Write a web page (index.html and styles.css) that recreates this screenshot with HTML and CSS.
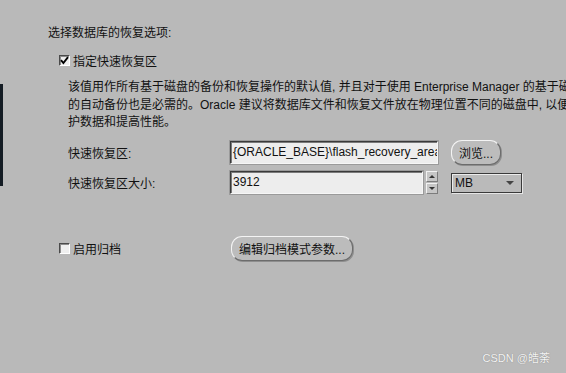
FILE: index.html
```html
<!DOCTYPE html>
<html lang="zh-CN">
<head>
    <meta charset="UTF-8">
    <meta name="viewport" content="width=device-width, initial-scale=1.0">
    <title>恢复选项</title>
    <link rel="stylesheet" href="styles.css">
</head>
<body>
    <div class="edge"></div>
    <div class="dialog">
        <div class="title">选择数据库的恢复选项:</div>
        <label class="option">
            <span class="box">
                <svg width="9" height="9" viewBox="0 0 9 9"><path d="M1 4.2 L3.4 7 L8 1.2" fill="none" stroke="#000" stroke-width="1.9"/></svg>
            </span>
            指定快速恢复区
        </label>
        <div class="desc">
            <span>该值用作所有基于磁盘的备份和恢复操作的默认值, 并且对于使用 Enterprise Manager 的基于磁盘</span>
            <span>的自动备份也是必需的。Oracle 建议将数据库文件和恢复文件放在物理位置不同的磁盘中, 以便保</span>
            <span>护数据和提高性能。</span>
        </div>
        <div class="fields">
            <div class="row first">
                <span class="field-label">快速恢复区:</span>
                <div class="text-input wide">{ORACLE_BASE}\flash_recovery_area</div>
                <button class="btn browse">浏览...</button>
            </div>
            <div class="row second">
                <span class="field-label">快速恢复区大小:</span>
                <div class="text-input narrow">3912</div>
                <div class="spinner">
                    <span class="up"></span>
                    <span class="down"></span>
                </div>
                <div class="select">MB<span class="arrow"></span></div>
            </div>
        </div>
        <div class="archive">
            <label class="option">
                <span class="box"></span>
                启用归档
            </label>
            <button class="btn edit">编辑归档模式参数...</button>
        </div>
    </div>
    <div class="watermark">CSDN @皓荼</div>
</body>
</html>
```

FILE: styles.css
```css
/* 整体 */
body{
    margin: 0;
    width: 566px;
    height: 373px;
    overflow: hidden;
    position: relative;
    background: #b9b9b9;
    color: #111;
    font-family: "Liberation Sans", "Noto Sans CJK SC", sans-serif;
    font-size: 12px;
}
/* 左边窗口边 */
.edge{
    position: absolute;
    left: 0;
    top: 84px;
    width: 3px;
    height: 102px;
    background: #141c24;
}
.dialog{
    padding: 25px 0 0 48px;
}
.title{line-height: 16px;}
/* 复选框 */
.option{
    display: flex;
    align-items: center;
    gap: 3px;
    height: 12px;
    margin: 13px 0 0 11px;
}
.box{
    flex: none;
    width: 11px;
    height: 11px;
    box-sizing: border-box;
    display: flex;
    align-items: center;
    justify-content: center;
    background: #efefef;
    border: 1px solid #fff;
    border-top-color: #4a4a4a;
    border-left-color: #4a4a4a;
    box-shadow: inset 1px 1px 0 #8c8c8c;
}
/* 说明文字 */
.desc{
    margin-top: 13px;
    padding-left: 20px;
    line-height: 17.5px;
}
.desc span{
    display: block;
    white-space: nowrap;
}
/* 两行输入 */
.fields{
    margin-top: 8.5px;
    padding-left: 20px;
}
.row{
    display: flex;
    align-items: center;
}
.row.first{height: 25px;}
.row.second{height: 23px; margin-top: 6px;}
.field-label{
    flex: none;
    width: 162px;
}
.text-input{
    flex: none;
    height: 23px;
    box-sizing: border-box;
    padding: 0 2px;
    line-height: 20px;
    white-space: nowrap;
    overflow: hidden;
    background: #ededed;
    border: 1px solid #f6f6f6;
    border-top-color: #3a3a3a;
    border-left-color: #3a3a3a;
    box-shadow: inset 1px 1px 0 #7a7a7a, 0 0 0 1px #9a9a9a;
}
.wide{width: 208px;}
.narrow{width: 193px;}
/* 按钮 */
.btn{
    flex: none;
    height: 25px;
    padding: 0;
    font: inherit;
    color: #111;
    background: #bcbcbc;
    border: 1px solid #6c6c6c;
    border-top-color: #f4f4f4;
    border-left-color: #f4f4f4;
    border-radius: 11px;
    box-shadow: 1px 1px 0 #8e8e8e;
}
.browse{
    width: 50px;
    margin-left: 13px;
}
.edit{width: 122px;}
/* 上下箭头 */
.spinner{
    flex: none;
    width: 12px;
    height: 23px;
    margin-left: 3px;
    display: flex;
    flex-direction: column;
    gap: 1px;
}
.spinner span{
    flex: 1;
    position: relative;
    background: #c6c6c6;
    border: 1px solid #7c7c7c;
    border-top-color: #f2f2f2;
    border-left-color: #f2f2f2;
}
.spinner span::after{
    content: "";
    position: absolute;
    left: 2px;
    top: 3px;
    border-left: 3px solid transparent;
    border-right: 3px solid transparent;
}
.spinner .up::after{border-bottom: 3px solid #333;}
.spinner .down::after{border-top: 3px solid #333;}
/* 下拉 */
.select{
    flex: none;
    width: 71px;
    height: 20px;
    margin-left: 13px;
    box-sizing: border-box;
    display: flex;
    align-items: center;
    justify-content: space-between;
    padding: 0 7px 0 3px;
    background: #bababa;
    border: 1px solid #3a3a3a;
    box-shadow: inset 1px 1px 0 #ececec, 1px 1px 0 #e6e6e6;
}
.arrow{
    border-left: 4px solid transparent;
    border-right: 4px solid transparent;
    border-top: 4px solid #444;
}
/* 启用归档 */
.archive{
    display: flex;
    align-items: center;
    height: 25px;
    margin-top: 42px;
}
.archive .option{
    margin-top: 0;
    width: 161px;
    flex: none;
    box-sizing: content-box;
    padding-right: 11px;
}
.watermark{
    position: absolute;
    right: 16px;
    bottom: 8px;
    font-size: 11px;
    color: #f4f4f4;
    text-shadow: 0 0 1px #7a7a7a;
}
```
